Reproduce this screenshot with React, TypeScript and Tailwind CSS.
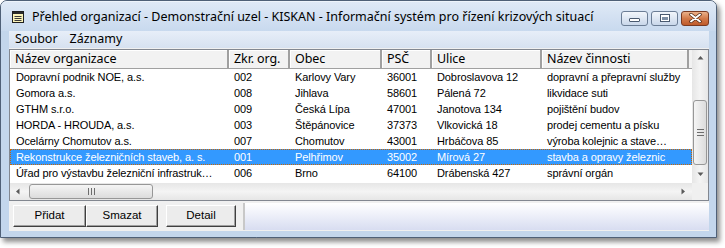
const cols = [219, 61, 92, 50, 110, 147];

const headers = ["Název organizace", "Zkr. org.", "Obec", "PSČ", "Ulice", "Název činnosti"];

const rows = [
  ["Dopravní podnik NOE, a.s.", "002", "Karlovy Vary", "36001", "Dobroslavova 12", "dopravní a přepravní služby"],
  ["Gomora a.s.", "008", "Jihlava", "58601", "Pálená 72", "likvidace suti"],
  ["GTHM s.r.o.", "009", "Česká Lípa", "47001", "Janotova 134", "pojištění budov"],
  ["HORDA - HROUDA, a.s.", "003", "Štěpánovice", "37373", "Vlkovická 18", "prodej cementu a písku"],
  ["Ocelárny Chomutov a.s.", "007", "Chomutov", "43001", "Hrbáčova 85", "výroba kolejnic a stave…"],
  ["Rekonstrukce železničních staveb, a. s.", "001", "Pelhřimov", "35002", "Mírová 27", "stavba a opravy železnic"],
  ["Úřad pro výstavbu železniční infrastruk…", "006", "Brno", "64100", "Drábenská 427", "správní orgán"],
];

const selected = 5;

function WindowIcon() {
  return (
    <svg width="16" height="16" viewBox="0 0 16 16">
      <rect x="2.5" y="2.5" width="11" height="11" fill="#fbf3b8" stroke="#1f1f1f" />
      <rect x="3" y="3" width="10" height="2" fill="#2b2b2b" />
      <path d="M4.5 7.5h7M4.5 9.5h7M4.5 11.5h7" stroke="#3a3a3a" />
    </svg>
  );
}

function Arrow({ dir }: { dir: "up" | "down" | "left" | "right" }) {
  const d = {
    up: "M0.5 4.5L3.5 1L6.5 4.5Z",
    down: "M0.5 1.5L3.5 5L6.5 1.5Z",
    left: "M4.5 0.5L1 3.5L4.5 6.5Z",
    right: "M1.5 0.5L5 3.5L1.5 6.5Z",
  }[dir];
  return (
    <svg width="7" height="7" viewBox="0 0 7 7">
      <path d={d} fill="#5a5a5a" />
    </svg>
  );
}

function TitleBar() {
  return (
    <div className="h-[30px] flex items-center pl-[9px] pr-[7px] rounded-t-[6px] bg-gradient-to-b from-[#dfe9f6] to-[#c8d9ee] border-t border-[#eef4fb]">
      <WindowIcon />
      <span className="ml-[6px] mt-[1px] text-[12.5px] text-black font-['Noto_Sans',sans-serif] whitespace-nowrap">
        Přehled organizací - Demonstrační uzel - KISKAN - Informační systém pro řízení krizových situací
      </span>
      <div className="ml-auto flex gap-[3px] mt-[3px]">
        <div className="w-[27px] h-[15px] rounded-[3px] border border-[#6b7d95] bg-gradient-to-b from-[#f2f6fb] to-[#c9d7ea] flex items-center justify-center">
          <div className="w-[11px] h-[4px] mt-[4px] bg-white border border-[#4a5a70] rounded-[1px]" />
        </div>
        <div className="w-[27px] h-[15px] rounded-[3px] border border-[#6b7d95] bg-gradient-to-b from-[#f2f6fb] to-[#c9d7ea] flex items-center justify-center">
          <div className="w-[10px] h-[8px] border border-[#4a5a70] bg-white flex items-center justify-center">
            <div className="w-[6px] h-[3px] mt-[1px] bg-[#7d8ea4]" />
          </div>
        </div>
        <div className="w-[28px] h-[15px] rounded-[3px] border border-[#7a3a22] bg-gradient-to-b from-[#eab18a] via-[#d27a4a] to-[#bf5a2a] flex items-center justify-center">
          <svg width="13" height="10" viewBox="0 0 13 10">
            <path d="M2 1.5L11 8.5M11 1.5L2 8.5" stroke="#4a2412" strokeWidth="3.4" strokeLinecap="round" />
            <path d="M2 1.5L11 8.5M11 1.5L2 8.5" stroke="#ffffff" strokeWidth="2" strokeLinecap="round" />
          </svg>
        </div>
      </div>
    </div>
  );
}

function MenuBar() {
  return (
    <div className="h-[17px] flex items-center gap-[12px] pl-[6px] bg-gradient-to-b from-[#e7eef8] to-[#d6e1f0] text-[12.5px] text-black font-['Noto_Sans',sans-serif]">
      <span>Soubor</span>
      <span>Záznamy</span>
    </div>
  );
}

function Header() {
  return (
    <div className="flex h-[19px] font-['Noto_Sans',sans-serif] text-[12.5px] text-black">
      {headers.map((h, i) => (
        <div
          key={h}
          style={{ width: cols[i] }}
          className="h-full pl-[5px] leading-[17px] bg-[#f2f2f2] border-r-2 border-b border-[#a0a0a0] shadow-[inset_1px_1px_0_#ffffff] whitespace-nowrap overflow-hidden"
        >
          {h}
        </div>
      ))}
      <div className="flex-1 h-full bg-[#f2f2f2] border-b border-[#a0a0a0]" />
    </div>
  );
}

function Row({ cells, active }: { cells: string[]; active: boolean }) {
  return (
    <div
      className={
        active
          ? "flex h-[16px] bg-[#3399ff] text-white border border-dotted border-[#cc6600]"
          : "flex h-[16px] text-black border border-transparent"
      }
    >
      {cells.map((c, i) => (
        <div
          key={i}
          style={{ width: i === 0 ? cols[i] - 1 : cols[i] }}
          className="pl-[5px] leading-[14px] whitespace-nowrap overflow-hidden"
        >
          {c}
        </div>
      ))}
    </div>
  );
}

function VScroll() {
  return (
    <div className="w-[16px] h-[133px] flex flex-col bg-gradient-to-r from-[#e6e6e6] via-[#f4f4f4] to-[#e6e6e6]">
      <div className="h-[17px] flex items-center justify-center">
        <Arrow dir="up" />
      </div>
      <div className="h-[33px]" />
      <div className="h-[65px] mx-[1px] rounded-[3px] border border-[#979797] bg-gradient-to-r from-[#f5f5f5] to-[#dcdcdc] flex flex-col items-center justify-center gap-[2px]">
        <div className="w-[7px] h-px bg-[#6d6d6d]" />
        <div className="w-[7px] h-px bg-[#6d6d6d]" />
        <div className="w-[7px] h-px bg-[#6d6d6d]" />
      </div>
      <div className="flex-1 flex items-center justify-center">
        <Arrow dir="down" />
      </div>
    </div>
  );
}

function HScroll() {
  return (
    <div className="h-[17px] flex items-center bg-gradient-to-b from-[#e6e6e6] via-[#f4f4f4] to-[#e6e6e6]">
      <div className="w-[17px] flex items-center justify-center">
        <Arrow dir="left" />
      </div>
      <div className="w-[124px] h-[15px] ml-[2px] rounded-[3px] border border-[#979797] bg-gradient-to-b from-[#f5f5f5] to-[#dcdcdc] flex items-center justify-center gap-[2px]">
        <div className="w-px h-[7px] bg-[#6d6d6d]" />
        <div className="w-px h-[7px] bg-[#6d6d6d]" />
        <div className="w-px h-[7px] bg-[#6d6d6d]" />
      </div>
      <div className="flex-1" />
      <div className="w-[17px] flex items-center justify-center">
        <Arrow dir="right" />
      </div>
    </div>
  );
}

function ListView() {
  return (
    <div className="h-[152px] border border-[#828790] bg-white flex flex-col font-['Liberation_Sans',Arial,sans-serif] text-[11px] tracking-[-0.1px]">
      <div className="flex h-[133px]">
        <div className="w-[682px] flex flex-col">
          <Header />
          {rows.map((r, i) => (
            <Row key={i} cells={r} active={i === selected} />
          ))}
        </div>
        <VScroll />
      </div>
      <div className="flex h-[17px]">
        <div className="w-[682px]">
          <HScroll />
        </div>
        <div className="flex-1 bg-[#f0f0f0]" />
      </div>
    </div>
  );
}

function Button({ label, w }: { label: string; w: string }) {
  return (
    <div
      className={`${w} h-[22px] flex items-center justify-center bg-[#ececec] border border-[#404040] border-t-white border-l-white shadow-[inset_-1px_-1px_0_#a0a0a0] text-[11.5px] text-black font-['Liberation_Sans',Arial,sans-serif]`}
    >
      {label}
    </div>
  );
}

export default function App() {
  return (
    <div className="w-[725px] h-[248px] bg-white">
      <div className="w-[717px] h-[238px] flex flex-col rounded-t-[7px] border border-[#4f6077] bg-[#c3d6ec] shadow-[3px_4px_5px_rgba(0,0,0,0.45)]">
        <TitleBar />
        <div className="flex flex-col pl-[8px] pr-[7px]">
          <div className="w-[700px] h-[200px] flex flex-col bg-[#f0f0f0]">
            <MenuBar />
            <div className="h-px" />
            <ListView />
            <div className="flex items-start h-[30px]">
              <div className="flex ml-[4px] mt-[4px]">
                <Button label="Přidat" w="w-[73px]" />
                <Button label="Smazat" w="w-[72px]" />
              </div>
              <div className="ml-[8px] mt-[4px]">
                <Button label="Detail" w="w-[70px]" />
              </div>
              <div className="flex-1 ml-[7px] mt-[2px] h-[27px] border-l-2 border-[#c8c8c8] bg-gradient-to-b from-white to-[#d8ddf1]" />
            </div>
          </div>
        </div>
      </div>
    </div>
  );
}
